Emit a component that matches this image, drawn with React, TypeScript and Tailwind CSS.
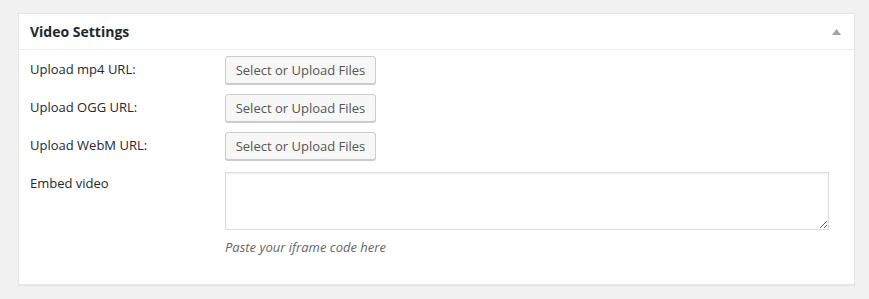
import React from "react";

const font = { fontFamily: '"Open Sans", "Noto Sans", sans-serif' };

function UploadRow({ label }: { label: string }) {
  return (
    <div className="flex items-start h-[28px] mb-[10px]">
      <div className="w-[206px] pl-[11px] text-[13px] leading-[26px] text-[#23282d]">{label}</div>
      <button className="h-[28px] w-[151px] rounded-[3px] border border-[#cccccc] bg-[#f7f7f7] text-[13px] leading-[26px] text-[#555555] shadow-[0_1px_0_#cccccc] pb-[1px]">
        Select or Upload Files
      </button>
    </div>
  );
}

export default function App() {
  return (
    <div className="w-[869px] h-[299px] bg-[#f1f1f1] pt-[13px] pl-[18px]" style={font}>
      <div className="w-[837px] h-[272px] bg-white border border-[#e5e5e5] shadow-[0_1px_1px_rgba(0,0,0,0.04)]">
        <div className="h-[36px] border-b border-[#eeeeee] flex items-center justify-between pl-[11px] pr-[13px]">
          <h2 className="text-[14px] font-bold text-[#23282d] leading-[20px]">Video Settings</h2>
          <svg width="9" height="6" viewBox="0 0 9 6" className="mt-[1px]">
            <polygon points="4.5,0 9,6 0,6" fill="#a0a5aa" />
          </svg>
        </div>
        <div className="pt-[6px]">
          <UploadRow label="Upload mp4 URL:" />
          <UploadRow label="Upload OGG URL:" />
          <UploadRow label="Upload WebM URL:" />
          <div className="flex items-start mt-[12px]">
            <div className="w-[206px] pl-[11px] text-[13px] leading-[20px] text-[#23282d] pt-[1px]">Embed video</div>
            <div>
              <textarea className="block w-[604px] h-[58px] border border-[#dddddd] bg-white shadow-[inset_0_1px_2px_rgba(0,0,0,0.07)] outline-none" />
              <p className="mt-[7px] text-[13px] italic text-[#666666] leading-[20px]">Paste your iframe code here</p>
            </div>
          </div>
        </div>
      </div>
    </div>
  );
}
